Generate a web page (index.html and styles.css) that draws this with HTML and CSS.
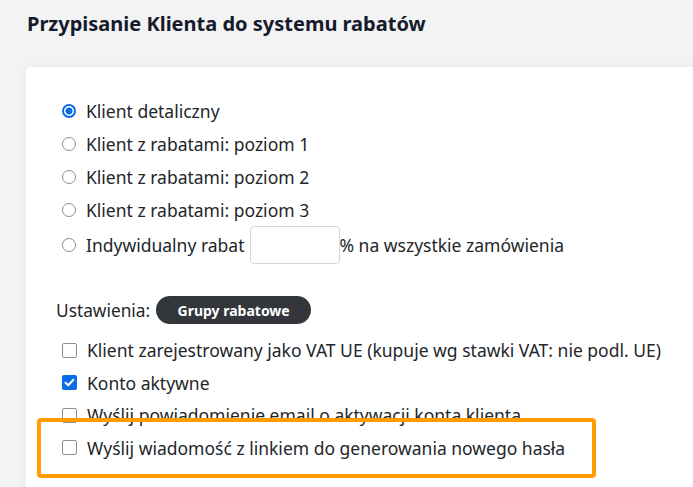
FILE: index.html
```html
<!DOCTYPE html>
<html lang="pl">
<head>
<meta charset="utf-8">
<title>Przypisanie Klienta do systemu rabatów</title>
<link rel="stylesheet" href="styles.css">
</head>
<body>
<div class="page">
  <h1 class="title">Przypisanie Klienta do systemu rabatów</h1>
  <div class="card">
    <div class="radios">
      <label class="row"><input type="radio" name="typ" class="radio" checked><span>Klient detaliczny</span></label>
      <label class="row"><input type="radio" name="typ" class="radio"><span>Klient z rabatami: poziom 1</span></label>
      <label class="row"><input type="radio" name="typ" class="radio"><span>Klient z rabatami: poziom 2</span></label>
      <label class="row"><input type="radio" name="typ" class="radio"><span>Klient z rabatami: poziom 3</span></label>
      <label class="row row-input"><input type="radio" name="typ" class="radio"><span>Indywidualny rabat</span><input type="text" class="pct"><span>% na wszystkie zamówienia</span></label>
    </div>
    <div class="settings">
      <span>Ustawienia:</span>
      <button class="pill" type="button">Grupy rabatowe</button>
    </div>
    <div class="checks">
      <label class="row"><input type="checkbox" class="check"><span>Klient zarejestrowany jako VAT UE (kupuje wg stawki VAT: nie podl. UE)</span></label>
      <label class="row"><input type="checkbox" class="check" checked><span>Konto aktywne</span></label>
      <label class="row"><input type="checkbox" class="check"><span>Wyślij powiadomienie email o aktywacji konta klienta</span></label>
      <label class="row"><input type="checkbox" class="check"><span>Wyślij wiadomość z linkiem do generowania nowego hasła</span></label>
    </div>
  </div>
  <div class="highlight"></div>
</div>
</body>
</html>
```

FILE: styles.css
```css
html, body {
  margin: 0;
  padding: 0;
  overflow: hidden;
}
body {
  background: #f3f3f3;
  font-family: "Noto Sans", "Open Sans", sans-serif;
  color: #22262b;
  width: 693px;
  height: 487px;
}
.page {
  position: relative;
  padding: 9px 0 0 26px;
}
.title {
  margin: 0 0 0 1px;
  font-size: 20px;
  font-weight: 700;
  line-height: 30px;
  color: #151b2c;
}
.card {
  margin-top: 28px;
  width: 720px;
  height: 460px;
  background: #fff;
  border-radius: 4px;
  box-shadow: 0 0 10px rgba(0, 0, 0, 0.05);
  padding: 27px 0 0 36px;
  box-sizing: border-box;
}
.row {
  display: flex;
  align-items: center;
  height: 33px;
  font-size: 17.5px;
}
.row-input {
  height: 38px;
}
.radio {
  appearance: none;
  -webkit-appearance: none;
  width: 14px;
  height: 14px;
  margin: 0 10px 0 0;
  border: 1.5px solid #8d8c97;
  border-radius: 50%;
  box-sizing: border-box;
  background: #fff;
  flex: none;
}
.radio:checked {
  border: 2px solid #0b6be8;
  background: radial-gradient(circle, #0b6be8 0 3.3px, #fff 3.8px);
}
.pct {
  width: 90px;
  height: 38px;
  box-sizing: border-box;
  margin: 0 0 0 5px;
  border: 1px solid #d6d6d9;
  border-radius: 4px;
  background: #fff;
  padding: 0;
}
.settings {
  display: flex;
  align-items: center;
  gap: 6px;
  margin: 32px 0 0 -6px;
  height: 28px;
  font-size: 17.3px;
}
.pill {
  height: 28px;
  width: 155px;
  border: none;
  border-radius: 14px;
  background: #33363b;
  color: #fff;
  font-family: "Noto Sans", sans-serif;
  font-weight: 700;
  font-size: 14px;
  padding: 0;
}
.checks {
  margin-top: 10px;
}
.checks .row {
  height: 32.5px;
}
.check {
  appearance: none;
  -webkit-appearance: none;
  width: 15px;
  height: 15px;
  margin: 0 10px 0 0;
  border: 1.5px solid #8d8c97;
  border-radius: 2px;
  box-sizing: border-box;
  background: #fff;
  flex: none;
}
.check:checked {
  border: none;
  background: #0b6be8 url("data:image/svg+xml,%3Csvg xmlns='http://www.w3.org/2000/svg' viewBox='0 0 15 15'%3E%3Cpath d='M3.6 7.7l2.6 2.6 5.2-5.5' fill='none' stroke='%23fff' stroke-width='2' stroke-linecap='round' stroke-linejoin='round'/%3E%3C/svg%3E") center/15px 15px no-repeat;
}
.highlight {
  position: absolute;
  left: 37px;
  top: 418px;
  width: 559px;
  height: 60px;
  box-sizing: border-box;
  border: 4px solid #ff9c00;
  border-radius: 4px;
}
```
